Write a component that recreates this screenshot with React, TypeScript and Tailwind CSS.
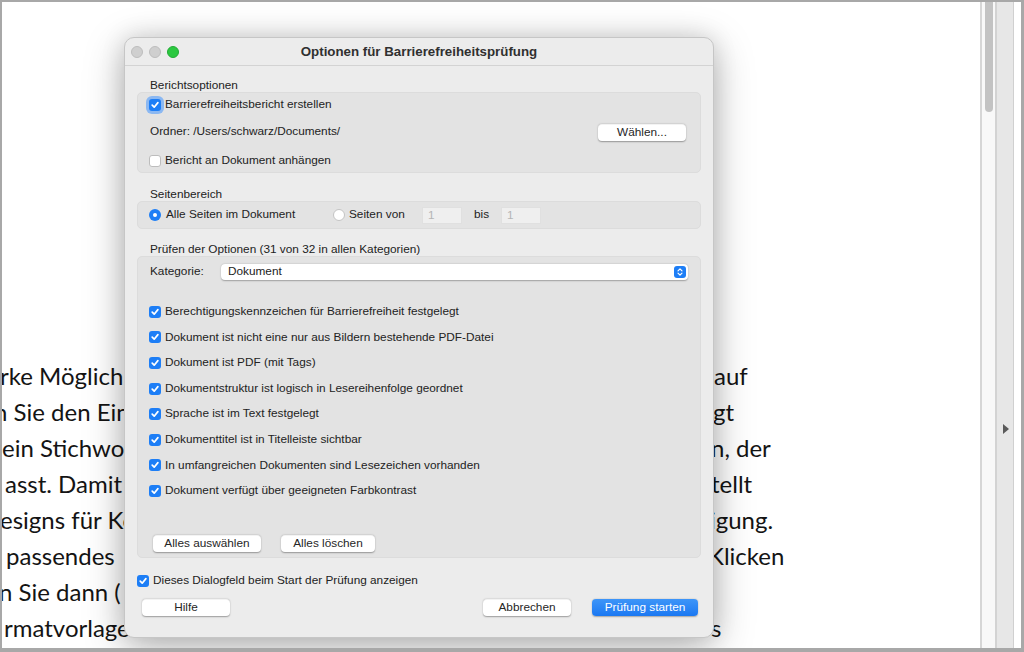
import React from "react";

const ui = "font-['Liberation_Sans',Arial,sans-serif]";

function Check({ checked = true, focus = false }: { checked?: boolean; focus?: boolean }) {
  return (
    <div
      className={`w-[12px] h-[12px] shrink-0 rounded-[3px] flex items-center justify-center ${
        checked ? "bg-[#1d7ef6]" : "bg-white border border-[#bdbdbd]"
      } ${focus ? "ring-[3px] ring-[#8bb8f2]" : ""}`}
    >
      {checked && (
        <svg width="10" height="10" viewBox="0 0 10 10">
          <path d="M2.2 5.2 L4.2 7.2 L7.9 2.6" fill="none" stroke="white" strokeWidth="1.7" strokeLinecap="round" strokeLinejoin="round" />
        </svg>
      )}
    </div>
  );
}

function Radio({ on }: { on: boolean }) {
  return (
    <div
      className={`w-[12px] h-[12px] shrink-0 rounded-full flex items-center justify-center ${
        on ? "bg-[#1d7ef6]" : "bg-white border border-[#c4c4c4]"
      }`}
    >
      {on && <div className="w-[4px] h-[4px] rounded-full bg-white" />}
    </div>
  );
}

function Btn({ children, w, primary = false }: { children: React.ReactNode; w: string; primary?: boolean }) {
  return (
    <div
      className={`${w} h-[17px] rounded-[4px] flex items-center justify-center text-[11.8px] leading-none ${
        primary
          ? "bg-gradient-to-b from-[#3d95f8] to-[#1a78f2] text-white shadow-[0_0.5px_1.5px_rgba(0,0,0,0.3)]"
          : "bg-white text-[#262626] shadow-[0_0.5px_1.5px_rgba(0,0,0,0.35)] border-t border-[#f3f3f3]"
      }`}
    >
      {children}
    </div>
  );
}

const checks = [
  "Berechtigungskennzeichen für Barrierefreiheit festgelegt",
  "Dokument ist nicht eine nur aus Bildern bestehende PDF-Datei",
  "Dokument ist PDF (mit Tags)",
  "Dokumentstruktur ist logisch in Lesereihenfolge geordnet",
  "Sprache ist im Text festgelegt",
  "Dokumenttitel ist in Titelleiste sichtbar",
  "In umfangreichen Dokumenten sind Lesezeichen vorhanden",
  "Dokument verfügt über geeigneten Farbkontrast",
];

const lines: { left: string; ml: string; right: string; rl: string }[] = [
  { left: "rke Möglichkeiten", ml: "-ml-[2px]", right: "auf", rl: "ml-[712px]" },
  { left: "n Sie den Eintrag", ml: "-ml-[8px]", right: "gt", rl: "ml-[711px]" },
  { left: "ein Stichwort", ml: "ml-[0px]", right: "n, der", rl: "ml-[709px]" },
  { left: "asst. Damit", ml: "ml-[3px]", right: "tellt", rl: "ml-[709px]" },
  { left: "esigns für Kopf", ml: "-ml-[2px]", right: "igung.", rl: "ml-[708px]" },
  { left: "passendes", ml: "ml-[4px]", right: "Klicken", rl: "ml-[706px]" },
  { left: "n Sie dann (", ml: "-ml-[3px]", right: "", rl: "ml-[711px]" },
  { left: "rmatvorlagen", ml: "ml-[2px]", right: "s", rl: "ml-[709px]" },
];

export default function App() {
  return (
    <div className="w-[1024px] h-[652px] overflow-hidden bg-white border-t-2 border-l-2 border-r-[3px] border-b-4 border-[#a8a8a8] flex relative">
      {/* document */}
      <div className="flex-1 min-w-0 pt-[356px] overflow-hidden font-['Lato',sans-serif] text-[24px] leading-[36px] text-[#141414]">
        {lines.map((l, i) => (
          <div key={i} className="h-[36px] relative whitespace-nowrap">
            <span className={`absolute left-0 top-0 ${l.ml}`}>{l.left}</span>
            <span className={`absolute left-0 top-0 ${l.rl}`}>{l.right}</span>
          </div>
        ))}
      </div>

      {/* scroll columns */}
      <div className="w-[15px] shrink-0 border-l-2 border-[#d6d6d6] bg-[#f8f8f8]">
        <div className="ml-[3px] w-[8px] h-[110px] rounded-b-[4px] bg-[#c3c3c3]" />
      </div>
      <div className="w-[19px] shrink-0 border-l-2 border-[#d3d3d3] border-r border-r-[#d0d0d0] bg-[#e7e7e7] flex flex-col items-center pt-[422px]">
        <svg width="6" height="10" viewBox="0 0 6 10" className="ml-[1px]">
          <polygon points="0,0 6,5 0,10" fill="#5a5a5a" />
        </svg>
      </div>
      <div className="w-[7px] shrink-0 bg-white" />

      {/* dialog */}
      <div
        className={`${ui} absolute left-[122px] top-[35px] w-[590px] h-[601px] rounded-[10px] bg-[#ececec] border border-[#c6c6c6] shadow-[0_10px_40px_rgba(0,0,0,0.28),0_0_24px_rgba(0,0,0,0.12)] text-[#222] text-[11.8px] flex flex-col`}
      >
        <div className="h-[28px] shrink-0 border-b border-[#d3d3d3] flex items-center relative">
          <div className="flex items-center gap-[6px] pl-[6px]">
            <div className="w-[12px] h-[12px] rounded-full bg-[#cfcfcf] border border-[#bdbdbd]" />
            <div className="w-[12px] h-[12px] rounded-full bg-[#cfcfcf] border border-[#bdbdbd]" />
            <div className="w-[12px] h-[12px] rounded-full bg-[#2bc840] border border-[#22ab35]" />
          </div>
          <div className="absolute inset-0 flex items-center justify-center font-bold text-[13.3px] text-[#303030]">
            Optionen für Barrierefreiheitsprüfung
          </div>
        </div>

        <div className="px-[12px] pt-[12px] flex flex-col">
          <div className="h-[14px] leading-[14px] pl-[13px]">Berichtsoptionen</div>
          <div className="rounded-[5px] bg-[#e3e3e3] border border-[#dcdcdc] pt-[4px] pb-[3px] pl-[11px] pr-[14px] flex flex-col">
            <div className="h-[16px] flex items-center gap-[4px]">
              <Check focus />
              <span>Barrierefreiheitsbericht erstellen</span>
            </div>
            <div className="h-[18px] mt-[10px] flex items-center justify-between">
              <span className="pl-[1px]">Ordner: /Users/schwarz/Documents/</span>
              <Btn w="w-[88px]">Wählen...</Btn>
            </div>
            <div className="h-[16px] mt-[12px] flex items-center gap-[4px]">
              <Check checked={false} />
              <span>Bericht an Dokument anhängen</span>
            </div>
          </div>

          <div className="h-[14px] leading-[14px] pl-[13px] mt-[14px]">Seitenbereich</div>
          <div className="h-[28px] rounded-[5px] bg-[#e3e3e3] border border-[#dcdcdc] pl-[11px] flex items-center">
            <Radio on />
            <span className="ml-[5px] w-[167px]">Alle Seiten im Dokument</span>
            <Radio on={false} />
            <span className="ml-[4px] w-[73px]">Seiten von</span>
            <div className="w-[40px] h-[17px] bg-[#efefef] border border-[#e0e0e0] text-[#b5b5b5] pl-[5px] leading-[15px]">1</div>
            <span className="ml-[12px] w-[27px]">bis</span>
            <div className="w-[40px] h-[17px] bg-[#efefef] border border-[#e0e0e0] text-[#b5b5b5] pl-[5px] leading-[15px]">1</div>
          </div>

          <div className="h-[14px] leading-[14px] pl-[13px] mt-[13px]">
            Prüfen der Optionen (31 von 32 in allen Kategorien)
          </div>
          <div className="h-[302px] rounded-[5px] bg-[#e3e3e3] border border-[#dcdcdc] pt-[7px] pl-[11px] pr-[12px] flex flex-col">
            <div className="h-[16px] flex items-center">
              <span className="pl-[1px] w-[72px]">Kategorie:</span>
              <div className="flex-1 h-[16px] bg-white rounded-[4px] shadow-[0_0.5px_1.5px_rgba(0,0,0,0.3)] flex items-center justify-between pl-[7px] pr-[2px]">
                <span>Dokument</span>
                <div className="w-[12px] h-[12px] rounded-[3px] bg-[#1d7ef6] flex items-center justify-center">
                  <svg width="8" height="10" viewBox="0 0 8 10">
                    <path d="M2 3.8 L4 1.8 L6 3.8 M2 6.2 L4 8.2 L6 6.2" fill="none" stroke="white" strokeWidth="1.2" strokeLinecap="round" strokeLinejoin="round" />
                  </svg>
                </div>
              </div>
            </div>
            <div className="mt-[19px] flex flex-col">
              {checks.map((c) => (
                <div key={c} className="h-[25.6px] flex items-center gap-[4px]">
                  <Check />
                  <span>{c}</span>
                </div>
              ))}
            </div>
            <div className="mt-[31px] flex items-center gap-[20px] pl-[4px]">
              <Btn w="w-[108px]">Alles auswählen</Btn>
              <Btn w="w-[94px]">Alles löschen</Btn>
            </div>
          </div>

          <div className="h-[16px] mt-[15px] flex items-center gap-[4px]">
            <Check />
            <span>Dieses Dialogfeld beim Start der Prüfung anzeigen</span>
          </div>
          <div className="mt-[10px] flex items-center pl-[5px] pr-[3px]">
            <Btn w="w-[88px]">Hilfe</Btn>
            <div className="flex-1" />
            <Btn w="w-[88px]">Abbrechen</Btn>
            <div className="w-[21px]" />
            <Btn w="w-[106px]" primary>
              Prüfung starten
            </Btn>
          </div>
        </div>
      </div>
    </div>
  );
}
